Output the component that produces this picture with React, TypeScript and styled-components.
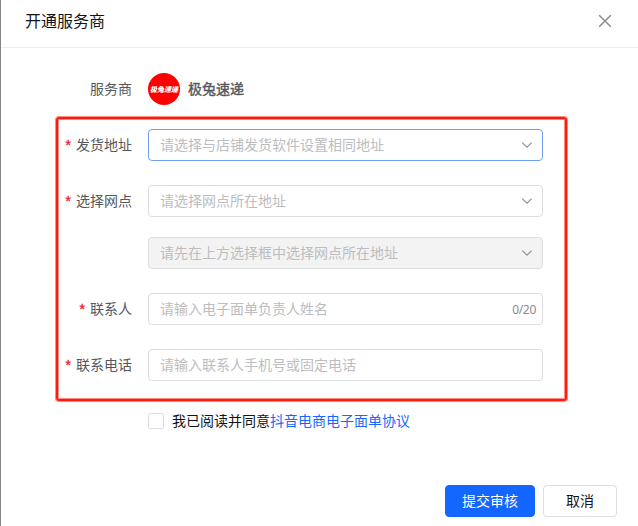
import React from "react";
import styled, { createGlobalStyle } from "styled-components";

const GlobalStyle = createGlobalStyle`
  * {
    box-sizing: border-box;
  }
  body {
    margin: 0;
    background: #fff;
    font-family: "Noto Sans CJK SC", sans-serif;
    font-size: 14px;
    color: #12141a;
  }
  input, button {
    font-family: inherit;
    font-size: inherit;
  }
`;

const Drawer = styled.div`
  display: flex;
  flex-direction: column;
  width: 638px;
  height: 526px;
  border-left: 1px solid #858585;
  background: #fff;
  overflow: hidden;
`;

const Header = styled.header`
  display: flex;
  flex: none;
  align-items: center;
  justify-content: space-between;
  height: 48px;
  padding: 0 26px 6px 24px;
  border-bottom: 1px solid #eeeff0;
`;

const Title = styled.h1`
  margin: 0;
  padding-bottom: 2px;
  font-size: 16px;
  font-weight: 400;
  line-height: 24px;
`;

const CloseButton = styled.button`
  display: flex;
  padding: 0;
  border: 0;
  background: none;
  color: #85878a;
`;

const Content = styled.main`
  flex: 1;
  padding-top: 25px;
`;

const Row = styled.div`
  display: flex;
  align-items: center;
  height: 32px;
`;

const Label = styled.div<{ $width: number }>`
  flex: none;
  width: ${({ $width }) => $width}px;
  padding: 0 16px 2px 0;
  text-align: right;
  line-height: 22px;
  color: #55585c;
`;

const Required = styled.span`
  margin-right: 5px;
  font-family: "Liberation Sans", sans-serif;
  color: #f0142f;
  -webkit-text-stroke: 0.3px #f0142f;
`;

const Logo = styled.div`
  display: flex;
  align-items: center;
  justify-content: center;
  width: 32px;
  height: 32px;
  margin-right: 8px;
  border-radius: 50%;
  background: #fe0000;
  color: #fff;
  font-size: 7px;
  font-weight: 900;
  font-style: italic;
  white-space: nowrap;
`;

const ProviderName = styled.span`
  padding-bottom: 3px;
  line-height: 22px;
  color: #55585c;
  -webkit-text-stroke: 0.4px #55585c;
`;

const FieldGroup = styled.section`
  display: flex;
  flex-direction: column;
  gap: 24px;
  width: 511px;
  height: 284px;
  margin: 12px 0 0 55px;
  padding-top: 10px;
  border: 2px solid #ff1a0c;
  border-radius: 3px;
  box-shadow: 0 0 0 1px rgba(255, 26, 12, 0.5), inset 0 0 0 1px rgba(255, 26, 12, 0.5);
`;

const FieldStack = styled.div`
  display: flex;
  flex-direction: column;
  gap: 20px;
`;

const Control = styled.div<{ $focused?: boolean; $disabled?: boolean }>`
  display: flex;
  align-items: center;
  width: 395px;
  height: 32px;
  padding: 0 10px 0 11px;
  border: 1px solid ${({ $focused }) => ($focused ? "#6e9df5" : "#dcdee1")};
  border-radius: 4px;
  background: ${({ $disabled }) => ($disabled ? "#f3f3f3" : "#fff")};
  color: #bbbdc0;
`;

const Placeholder = styled.span`
  flex: 1;
  padding-bottom: 2px;
  line-height: 22px;
`;

const Input = styled.input`
  flex: 1;
  min-width: 0;
  height: 24px;
  padding: 0 0 2px;
  border: 0;
  outline: 0;
  background: none;

  &::placeholder {
    color: #bbbdc0;
  }
`;

const Counter = styled.span`
  margin-right: -4px;
  font-family: "Noto Sans", sans-serif;
  font-size: 12px;
  letter-spacing: -0.3px;
  color: #898b8f;
`;

const Agreement = styled.label`
  display: flex;
  align-items: center;
  height: 32px;
  margin: 4px 0 0 147px;
`;

const AgreementText = styled.span`
  padding-bottom: 2px;
  line-height: 22px;
`;

const Checkbox = styled.span`
  width: 16px;
  height: 16px;
  margin-right: 8px;
  border: 1px solid #dcdee1;
  border-radius: 2px;
`;

const Link = styled.a`
  color: #1966ff;
`;

const Footer = styled.footer`
  display: flex;
  flex: none;
  justify-content: flex-end;
  gap: 8px;
  padding: 0 21px 9px;
`;

const Button = styled.button<{ $primary?: boolean }>`
  width: ${({ $primary }) => ($primary ? 90 : 74)}px;
  height: 32px;
  padding: 0 0 2px;
  border: 1px solid ${({ $primary }) => ($primary ? "#1366ff" : "#dcdee1")};
  border-radius: 4px;
  background: ${({ $primary }) => ($primary ? "#1366ff" : "#fff")};
  color: ${({ $primary }) => ($primary ? "#fff" : "#12141a")};
  line-height: 22px;
`;

const CloseIcon = () => (
  <svg width="14" height="14" viewBox="0 0 14 14" fill="none" stroke="currentColor" strokeWidth="1.4">
    <path d="M1.2 1.2 12.8 12.8M12.8 1.2 1.2 12.8" />
  </svg>
);

const ArrowIcon = () => (
  <svg width="11" height="8" viewBox="0 0 11 8" fill="none" stroke="#929497" strokeWidth="1.3">
    <path d="M1.2 1.6 6 6.1 10.6 1.6" />
  </svg>
);

interface SelectProps {
  placeholder: string;
  focused?: boolean;
  disabled?: boolean;
}

const Select = ({ placeholder, focused, disabled }: SelectProps) => (
  <Control $focused={focused} $disabled={disabled}>
    <Placeholder>{placeholder}</Placeholder>
    <ArrowIcon />
  </Control>
);

const FieldLabel = ({ text }: { text: string }) => (
  <Label $width={90}>
    <Required>*</Required>
    {text}
  </Label>
);

export default function App() {
  return (
    <>
      <GlobalStyle />
      <Drawer>
        <Header>
          <Title>开通服务商</Title>
          <CloseButton aria-label="关闭">
            <CloseIcon />
          </CloseButton>
        </Header>
        <Content>
          <Row>
            <Label $width={147}>服务商</Label>
            <Logo>极兔速递</Logo>
            <ProviderName>极兔速递</ProviderName>
          </Row>
          <FieldGroup>
            <Row>
              <FieldLabel text="发货地址" />
              <Select placeholder="请选择与店铺发货软件设置相同地址" focused />
            </Row>
            <FieldStack>
              <Row>
                <FieldLabel text="选择网点" />
                <Select placeholder="请选择网点所在地址" />
              </Row>
              <Row>
                <Label $width={90} />
                <Select placeholder="请先在上方选择框中选择网点所在地址" disabled />
              </Row>
            </FieldStack>
            <Row>
              <FieldLabel text="联系人" />
              <Control>
                <Input placeholder="请输入电子面单负责人姓名" />
                <Counter>0/20</Counter>
              </Control>
            </Row>
            <Row>
              <FieldLabel text="联系电话" />
              <Control>
                <Input placeholder="请输入联系人手机号或固定电话" />
              </Control>
            </Row>
          </FieldGroup>
          <Agreement>
            <Checkbox />
            <AgreementText>
              我已阅读并同意<Link>抖音电商电子面单协议</Link>
            </AgreementText>
          </Agreement>
        </Content>
        <Footer>
          <Button $primary>提交审核</Button>
          <Button>取消</Button>
        </Footer>
      </Drawer>
    </>
  );
}
